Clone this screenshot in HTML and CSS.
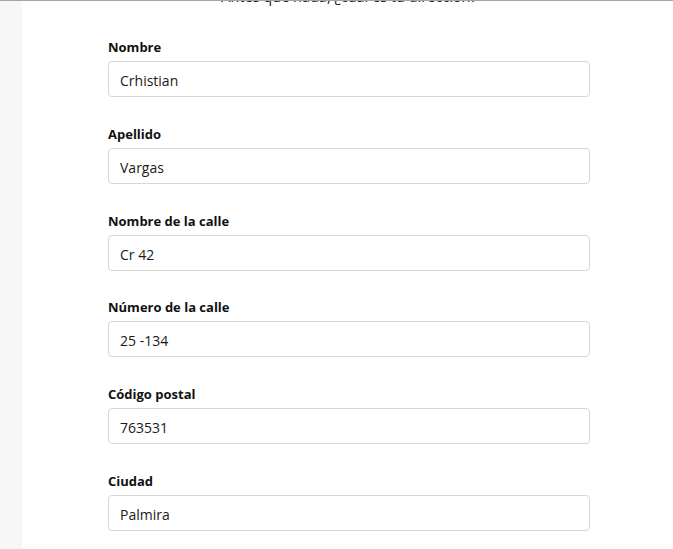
FILE: index.html
```html
<!DOCTYPE html>
<html lang="es">
<head>
<meta charset="utf-8">
<title>Dirección</title>
<link rel="stylesheet" href="styles.css">
</head>
<body>
<div class="topbar"></div>
<div class="layout">
  <aside class="side"></aside>
  <main class="main">
    <h2 class="title">Antes que nada, ¿cuál es tu dirección?</h2>
    <form class="form">
      <div class="field">
        <label class="label">Nombre</label>
        <div class="input">Crhistian</div>
      </div>
      <div class="field">
        <label class="label">Apellido</label>
        <div class="input">Vargas</div>
      </div>
      <div class="field">
        <label class="label">Nombre de la calle</label>
        <div class="input">Cr 42</div>
      </div>
      <div class="field">
        <label class="label">Número de la calle</label>
        <div class="input">25 -134</div>
      </div>
      <div class="field">
        <label class="label">Código postal</label>
        <div class="input">763531</div>
      </div>
      <div class="field">
        <label class="label">Ciudad</label>
        <div class="input">Palmira</div>
      </div>
    </form>
  </main>
</div>
</body>
</html>
```
FILE: styles.css
```css
html, body {
  margin: 0;
  padding: 0;
  background: #fff;
  height: 100%;
  overflow: hidden;
}
body {
  font-family: "Open Sans", "Liberation Sans", sans-serif;
  color: #111;
}
.topbar {
  height: 1px;
  background: #a6a6a6;
  position: relative;
  z-index: 2;
}
.layout {
  display: flex;
  height: 548px;
}
.side {
  width: 22px;
  flex: none;
  background: #f7f7f7;
}
.main {
  flex: 1;
  overflow: hidden;
  padding-left: 86px;
  padding-right: 83px;
}
.title {
  margin: -14px 0 0;
  font-size: 14.5px;
  line-height: 20px;
  font-weight: 400;
  text-align: center;
  color: #222;
}
.form {
  margin-top: 29px;
  display: flex;
  flex-direction: column;
  gap: 25.8px;
}
.field {
  display: flex;
  flex-direction: column;
}
.label {
  font-size: 13px;
  line-height: 20px;
  font-weight: 700;
  padding-top: 1px;
  margin-bottom: 4px;
}
.input {
  height: 36px;
  box-sizing: border-box;
  border: 1px solid #d6d6d6;
  border-radius: 4px;
  padding: 3px 11px 0;
  font-size: 14px;
  line-height: 31px;
  color: #1a1a1a;
}
```
